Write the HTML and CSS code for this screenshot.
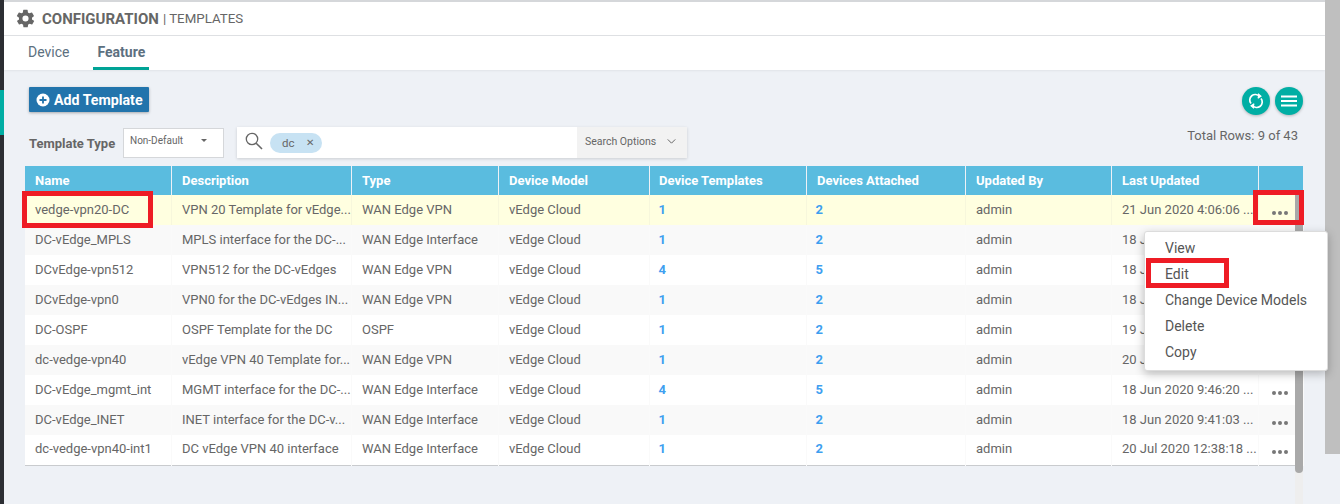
FILE: index.html
```html
<!DOCTYPE html>
<html lang="en">
<head>
    <meta charset="UTF-8" />
    <title>Configuration | Templates</title>
    <link rel="stylesheet" href="styles.css">
</head>
<body>
<div class="page">
    <div class="rail"><div class="rail-active"></div></div>

    <div class="main">
        <div class="title-bar">
            <svg class="gear" viewBox="0 0 24 24"><path d="M19.4 13a7.500 7.500 0 0 0 0-2l2.100-1.600a.5.5 0 0 0 .1-.6l-2-3.500a.5.5 0 0 0-.6-.2l-2.500 1a7.300 7.300 0 0 0-1.700-1l-.4-2.700a.5.5 0 0 0-.5-.4h-4a.5.5 0 0 0-.5.4l-.4 2.700a7.300 7.300 0 0 0-1.700 1l-2.500-1a.5.5 0 0 0-.6.2l-2 3.500a.5.5 0 0 0 .1.600L4.600 11a7.500 7.500 0 0 0 0 2l-2.100 1.600a.5.5 0 0 0-.1.600l2 3.500a.5.5 0 0 0 .6.2l2.500-1a7.300 7.300 0 0 0 1.700 1l.4 2.700a.5.5 0 0 0 .5.4h4a.5.5 0 0 0 .5-.4l.4-2.700a7.300 7.300 0 0 0 1.700-1l2.500 1a.5.5 0 0 0 .6-.2l2-3.500a.5.5 0 0 0-.1-.6zM12 15.500a3.500 3.500 0 1 1 0-7 3.500 3.500 0 0 1 0 7z"/></svg>
            <span class="title-main">CONFIGURATION</span>
            <span class="title-sub">| TEMPLATES</span>
        </div>

        <div class="tabs">
            <div class="tab">Device</div>
            <div class="tab tab-active">Feature</div>
        </div>

        <div class="content">
            <div class="actions">
                <button class="add-btn">
                    <svg class="plus" viewBox="0 0 14 14"><circle cx="7" cy="7" r="6.500" fill="#fff"/><path d="M7 3.500v7M3.500 7h7" stroke="#2274ac" stroke-width="1.800"/></svg>
                    Add Template
                </button>
                <div class="round-btns">
                    <div class="round-btn">
                        <svg viewBox="0 0 16 16" width="16" height="16" fill="none" stroke="#fff" stroke-width="1.700"><path d="M3 10.500A5.500 5.500 0 0 1 11.500 3.500"/><path d="M13 5.500A5.500 5.500 0 0 1 4.500 12.500"/><path d="M10 .8l2.800 2.400-3 2" stroke-width="1.300" fill="#fff"/><path d="M6 15.200l-2.800-2.400 3-2" stroke-width="1.300" fill="#fff"/></svg>
                    </div>
                    <div class="round-btn">
                        <svg viewBox="0 0 16 16" width="16" height="16" stroke="#fff" stroke-width="1.800"><path d="M0 3.500h16M0 8h16M0 12.500h16"/></svg>
                    </div>
                </div>
            </div>

            <div class="filters">
                <span class="filter-label">Template Type</span>
                <div class="select"><span>Non-Default</span><i class="caret"></i></div>
                <div class="search">
                    <svg class="search-icon" viewBox="0 0 18 18" fill="none" stroke="#666" stroke-width="1.300"><circle cx="7" cy="7" r="5.700"/><path d="M11.200 11.200l5.800 5.800" stroke-width="1.600"/></svg>
                    <span class="chip">dc <span class="chip-x">&#x2715;</span></span>
                    <div class="search-options">
                        Search Options
                        <svg class="chevron" viewBox="0 0 10 6" fill="none" stroke="#666" stroke-width="1.200"><path d="M.5.500L5 5 9.500.500"/></svg>
                    </div>
                </div>
                <span class="total">Total Rows: 9 of 43</span>
            </div>

            <table class="grid">
                <colgroup>
                    <col class="c-name"><col class="c-desc"><col class="c-type"><col class="c-model">
                    <col class="c-tpl"><col class="c-att"><col class="c-by"><col class="c-upd"><col class="c-more">
                </colgroup>
                <thead>
                <tr><th>Name</th><th>Description</th><th>Type</th><th>Device Model</th><th class="tight">Device Templates</th><th>Devices Attached</th><th>Updated By</th><th>Last Updated</th><th></th></tr>
                </thead>
                <tbody>
                <tr class="selected"><td>vedge-vpn20-DC</td><td>VPN 20 Template for vEdge...</td><td>WAN Edge VPN</td><td>vEdge Cloud</td><td class="num">1</td><td class="num">2</td><td>admin</td><td>21 Jun 2020 4:06:06 ...</td><td class="more"><i class="dots"></i></td></tr>
                <tr><td>DC-vEdge_MPLS</td><td>MPLS interface for the DC-...</td><td>WAN Edge Interface</td><td>vEdge Cloud</td><td class="num">1</td><td class="num">2</td><td>admin</td><td>18 J</td><td></td></tr>
                <tr><td>DCvEdge-vpn512</td><td>VPN512 for the DC-vEdges</td><td>WAN Edge VPN</td><td>vEdge Cloud</td><td class="num">4</td><td class="num">5</td><td>admin</td><td>18 J</td><td></td></tr>
                <tr><td>DCvEdge-vpn0</td><td>VPN0 for the DC-vEdges IN...</td><td>WAN Edge VPN</td><td>vEdge Cloud</td><td class="num">1</td><td class="num">2</td><td>admin</td><td>18 J</td><td></td></tr>
                <tr><td>DC-OSPF</td><td>OSPF Template for the DC</td><td>OSPF</td><td>vEdge Cloud</td><td class="num">1</td><td class="num">2</td><td>admin</td><td>19 J</td><td></td></tr>
                <tr><td>dc-vedge-vpn40</td><td>vEdge VPN 40 Template for...</td><td>WAN Edge VPN</td><td>vEdge Cloud</td><td class="num">1</td><td class="num">2</td><td>admin</td><td>20 J</td><td></td></tr>
                <tr><td>DC-vEdge_mgmt_int</td><td>MGMT interface for the DC-...</td><td>WAN Edge Interface</td><td>vEdge Cloud</td><td class="num">4</td><td class="num">5</td><td>admin</td><td>18 Jun 2020 9:46:20 ...</td><td class="more"><i class="dots"></i></td></tr>
                <tr><td>DC-vEdge_INET</td><td>INET interface for the DC-v...</td><td>WAN Edge Interface</td><td>vEdge Cloud</td><td class="num">1</td><td class="num">2</td><td>admin</td><td>18 Jun 2020 9:41:03 ...</td><td class="more"><i class="dots"></i></td></tr>
                <tr><td>dc-vedge-vpn40-int1</td><td>DC vEdge VPN 40 interface</td><td>WAN Edge Interface</td><td>vEdge Cloud</td><td class="num">1</td><td class="num">2</td><td>admin</td><td>20 Jul 2020 12:38:18 ...</td><td class="more"><i class="dots"></i></td></tr>
                </tbody>
            </table>
        </div>
    </div>

    <div class="gutter"></div>

    <!-- overlays -->
    <div class="scroll-track"><div class="scroll-thumb"></div></div>
    <div class="menu">
        <div class="menu-item">View</div>
        <div class="menu-item">Edit</div>
        <div class="menu-item">Change Device Models</div>
        <div class="menu-item">Delete</div>
        <div class="menu-item">Copy</div>
    </div>
    <div class="mark mark-name"></div>
    <div class="mark mark-more"></div>
    <div class="mark mark-edit"></div>
</div>
</body>
</html>
```

FILE: styles.css
```css
* {
    box-sizing: border-box;
}
html, body {
    margin: 0;
    height: 100%;
    overflow: hidden;
}
body {
    font-family: Roboto, "Liberation Sans", sans-serif;
    font-size: 13px;
    color: #666;
    background-color: #eef1f6;
}
.page {
    position: relative;
    display: flex;
    width: 1340px;
    height: 504px;
    overflow: hidden;
}
.rail {
    width: 4px;
    background-color: #2c2e33;
    padding-top: 90px;
}
.rail-active {
    height: 45px;
    background-color: #00aea4;
}
.main {
    width: 1321px;
    display: flex;
    flex-direction: column;
}
.title-bar {
    display: flex;
    align-items: center;
    height: 36px;
    padding-left: 12px;
    background-color: #fff;
    border-top: 2px solid #d5d7da;
    border-bottom: 1px solid #dfe1e4;
}
.gear {
    width: 21px;
    height: 21px;
    margin-left: -1px;
    fill: #666;
    margin-right: 6px;
}
.title-main {
    font-size: 15px;
    font-weight: 700;
    color: #666;
    margin-right: 4px;
}
.title-sub {
    font-size: 13.300px;
    color: #666;
}
.tabs {
    display: flex;
    height: 34px;
    padding-left: 14px;
    background-color: #fff;
    box-shadow: 0 1px 2px rgba(0,0,0,0.06);
}
.tab {
    padding: 8px 10px 0;
    font-size: 14px;
    color: #5c7080;
    margin-right: 14px;
}
.tab-active {
    padding: 8px 4px 0;
    font-weight: 700;
    border-bottom: 3px solid #00a396;
    width: 56px;
}
.content {
    padding: 17px 22px 0 21px;
}
.actions {
    display: flex;
    justify-content: space-between;
    align-items: flex-start;
    padding-left: 4px;
    height: 40px;
}
.add-btn {
    display: flex;
    align-items: center;
    gap: 4px;
    width: 120px;
    height: 25px;
    padding: 0 7px;
    border: 0;
    border-radius: 1px;
    background-color: #2274ac;
    color: #fff;
    font-family: inherit;
    font-size: 14.200px;
    font-weight: 700;
    white-space: nowrap;
    box-shadow: 0 1px 3px rgba(0,0,0,0.3);
}
.plus {
    width: 14px;
    height: 14px;
    flex: none;
}
.round-btns {
    display: flex;
    gap: 5px;
}
.round-btn {
    display: flex;
    align-items: center;
    justify-content: center;
    width: 28px;
    height: 28px;
    border-radius: 50%;
    background-color: #00aea4;
    box-shadow: 0 1px 3px rgba(0,0,0,0.25);
}
.filters {
    display: flex;
    align-items: center;
    height: 31px;
    padding-left: 4px;
    margin-bottom: 8px;
}
.filter-label {
    width: 94px;
    font-size: 13px;
    font-weight: 700;
    color: #666;
    padding-top: 1px;
}
.select {
    display: flex;
    justify-content: space-between;
    align-items: center;
    width: 101px;
    height: 30px;
    padding: 0 16px 4px 6px;
    margin-right: 13px;
    border: 1px solid #d5d7da;
    background-color: #fff;
    font-size: 10px;
}
.caret {
    border-top: 3px solid #666;
    border-left: 3.500px solid transparent;
    border-right: 3.500px solid transparent;
}
.search {
    display: flex;
    align-items: center;
    width: 450px;
    height: 31px;
    background-color: #fff;
    box-shadow: 0 1px 3px rgba(0,0,0,0.15);
}
.search-icon {
    width: 18px;
    height: 18px;
    margin: 0 7px 3px 8px;
}
.chip {
    display: flex;
    align-items: center;
    justify-content: space-between;
    width: 52px;
    height: 20px;
    padding: 0 8px 0 12px;
    border-radius: 10px;
    background-color: #c7e2f3;
    font-size: 11.500px;
}
.chip-x {
    font-size: 10px;
}
.search-options {
    display: flex;
    align-items: center;
    justify-content: space-between;
    height: 100%;
    margin-left: auto;
    width: 110px;
    padding: 0 11px 3px 8px;
    background-color: #f2f2f2;
    font-size: 10.500px;
}
.chevron {
    width: 9px;
    height: 5px;
}
.total {
    margin-left: auto;
    margin-right: 5px;
    margin-bottom: 14px;
    font-size: 13px;
}
.grid {
    width: 1278px;
    table-layout: fixed;
    border-collapse: collapse;
    border-bottom: 1px solid #c9cbce;
}
.c-name { width: 146px; }
.c-desc { width: 180px; }
.c-type { width: 147px; }
.c-model { width: 151px; }
.c-tpl { width: 157px; }
.c-att { width: 159px; }
.c-by { width: 146px; }
.c-upd { width: 147px; }
.c-more { width: 45px; }
.grid th {
    height: 29px;
    padding: 0 0 0 10.500px;
    text-align: left;
    font-size: 13px;
    font-weight: 700;
    color: #fff;
    background-color: #5abcdf;
    border-right: 1px solid #eef1f6;
}
.grid th:first-child, .grid td:first-child {
    padding-left: 10px;
}
.grid th.tight {
    padding-left: 9.500px;
}
.grid th:last-child {
    border-right: 0;
}
.grid td {
    height: 30px;
    padding: 0 0 2px 10.500px;
    white-space: nowrap;
    overflow: hidden;
    background-color: #fff;
    border-right: 1px solid #fafafa;
}
.grid tr:nth-child(even) td {
    background-color: #f9f9f9;
}
.grid tr.selected td {
    background-color: #ffffe0;
    border-right-color: #f7f7dc;
}
.grid td.num {
    padding-left: 9px;
    font-weight: 700;
    color: #3f9ff0;
}
.grid td.more {
    padding: 5px 0 0 13px;
}
.dots {
    display: block;
    width: 4px;
    height: 4px;
    border-radius: 50%;
    background-color: #777;
    box-shadow: 6px 0 #777, 12px 0 #777;
}
.gutter {
    width: 15px;
    height: 454px;
    background-color: #bfbfbf;
}
.scroll-track {
    position: absolute;
    left: 1295px;
    top: 195px;
    width: 8px;
    height: 309px;
    background-color: #eeeeee;
}
.scroll-thumb {
    height: 278px;
    border-radius: 0 0 4px 4px;
    background-color: #a9a9a9;
}
.menu {
    position: absolute;
    left: 1144px;
    top: 231px;
    width: 184px;
    height: 140px;
    padding: 3px 0 0 20px;
    background-color: #fff;
    border-radius: 3px;
    border: 1px solid #dcdcdc;
    box-shadow: 0 3px 10px rgba(0,0,0,0.25);
}
.menu-item {
    height: 26px;
    line-height: 26px;
    font-size: 14px;
    color: #555;
}
.mark {
    position: absolute;
    border: 5px solid #ee1c25;
}
.mark-name {
    left: 22px;
    top: 191px;
    width: 131px;
    height: 37px;
}
.mark-more {
    left: 1253px;
    top: 190px;
    width: 51px;
    height: 35px;
}
.mark-edit {
    left: 1146px;
    top: 258px;
    width: 83px;
    height: 30px;
}
```
